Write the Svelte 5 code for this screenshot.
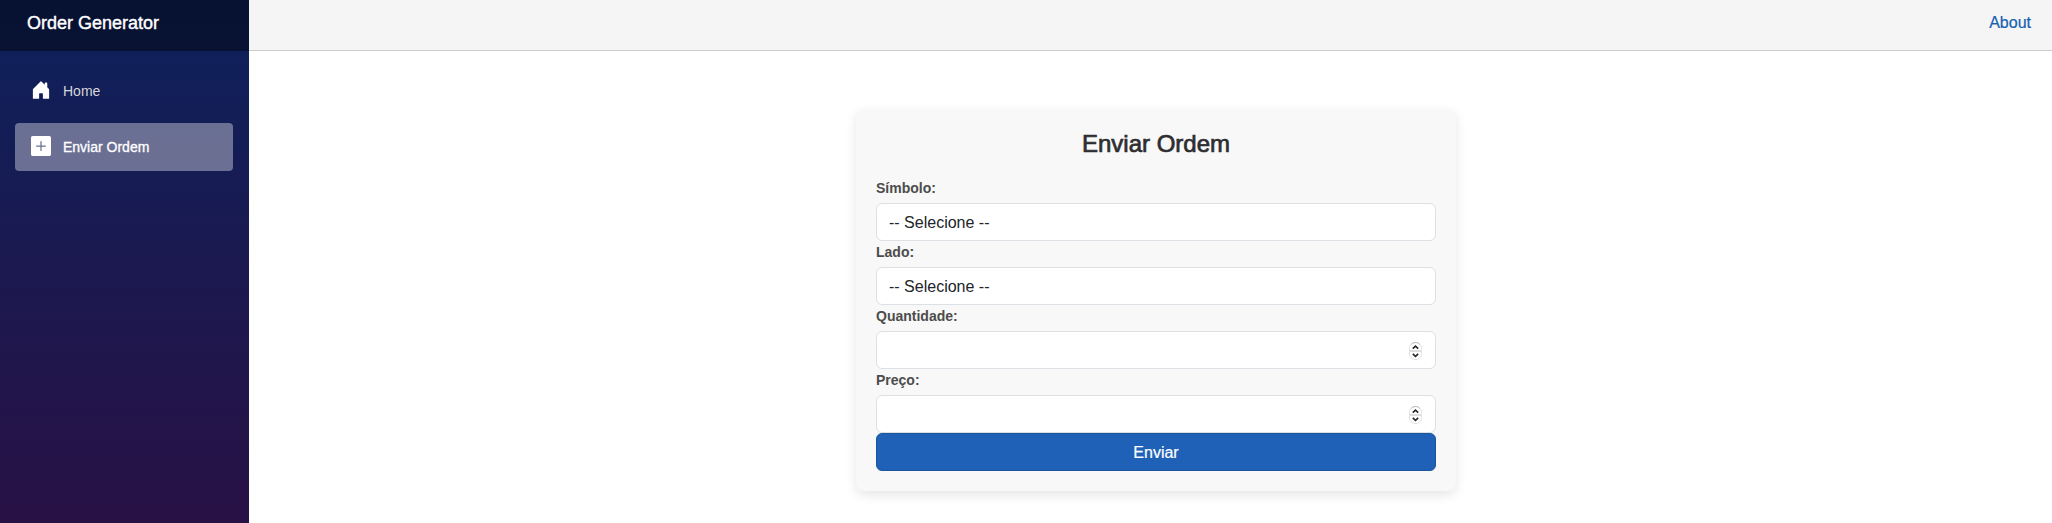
<script>
  let symbol = $state('');
  let side = $state('');
  let quantity = $state(null);
  let price = $state(null);
</script>

{#snippet stepper()}
  <svg class="stepper" width="13" height="18" viewBox="0 0 13 18" aria-hidden="true">
    <rect x=".5" y=".5" width="12" height="17" rx="5.5" fill="#fff" stroke="#e4e4e4" />
    <path d="M2 2.6Q3.500.5 6 .5h1Q9.500.5 11 2.600" fill="none" stroke="#bcbcbc" />
    <path d="M1 9h11" stroke="#dedede" stroke-width="2" />
    <path d="M3.800 6.700 6.500 4.200 9.200 6.700M3.800 11.800 6.500 14.300 9.200 11.800" fill="none" stroke="#262626" stroke-width="1.600" />
  </svg>
{/snippet}

<div class="page">
  <div class="sidebar">
    <div class="brand-row"><a class="brand" href="#home">Order Generator</a></div>
    <nav>
      <a class="nav-link" href="#home">
        <svg width="20" height="20" viewBox="0 0 16 16" fill="#fff" aria-hidden="true">
          <path d="M6.5 14.5v-3.505c0-.245.25-.495.5-.495h2c.25 0 .5.25.5.5v3.5a.5.5 0 0 0 .5.5h4a.5.5 0 0 0 .5-.5v-7a.5.5 0 0 0-.146-.354L13 5.793V2.5a.5.5 0 0 0-.5-.5h-1a.5.5 0 0 0-.5.5v1.293L8.354 1.146a.5.5 0 0 0-.708 0l-6 6A.5.5 0 0 0 1.5 7.500v7a.5.5 0 0 0 .5.5h4a.5.5 0 0 0 .5-.5Z" />
        </svg>
        Home
      </a>
      <a class="nav-link active" href="#order" aria-current="page">
        <svg width="20" height="20" viewBox="0 0 16 16" fill="#fff" aria-hidden="true">
          <path d="M1.500 0C.6 0 0 .6 0 1.500v13c0 .9.6 1.500 1.500 1.500h13c.9 0 1.500-.6 1.500-1.500v-13c0-.9-.6-1.500-1.500-1.500h-13zm7 4.500v3h3a.5.5 0 0 1 0 1h-3v3a.5.5 0 0 1-1 0v-3h-3a.5.5 0 0 1 0-1h3v-3a.5.5 0 0 1 1 0z" />
        </svg>
        Enviar Ordem
      </a>
    </nav>
  </div>

  <main>
    <header><a href="#about">About</a></header>
    <article>
      <form class="card" onsubmit={(e) => e.preventDefault()}>
        <h2>Enviar Ordem</h2>

        <label for="symbol">Símbolo:</label>
        <select id="symbol" bind:value={symbol}>
          <option value="">-- Selecione --</option>
        </select>

        <label for="side">Lado:</label>
        <select id="side" bind:value={side}>
          <option value="">-- Selecione --</option>
        </select>

        <label for="quantity">Quantidade:</label>
        <div class="number">
          <input id="quantity" type="number" bind:value={quantity} />
          {@render stepper()}
        </div>

        <label for="price">Preço:</label>
        <div class="number">
          <input id="price" type="number" bind:value={price} />
          {@render stepper()}
        </div>

        <button type="submit">Enviar</button>
      </form>
    </article>
  </main>
</div>

<style>
  :global(body) {
    margin: 0;
    background: #fff;
  }

  .page,
  .page * {
    box-sizing: border-box;
  }

  .page {
    display: flex;
    min-height: 100vh;
    font-family: "Liberation Sans", Arial, sans-serif;
    font-size: 16px;
    line-height: 24px;
    color: #212529;
  }

  a {
    text-decoration: none;
  }

  .sidebar {
    flex: 0 0 249px;
    background: linear-gradient(180deg, #0d215b 0%, #281145 100%);
  }

  .brand-row {
    height: 51px;
    padding: 11px 27px 0;
    background: rgba(0, 0, 0, 0.43);
  }

  .brand {
    color: #fff;
    font-size: 18px;
    -webkit-text-stroke: 0.4px #fff;
  }

  nav {
    display: flex;
    flex-direction: column;
    gap: 8px;
    padding: 16px 16px 0 15px;
  }

  .nav-link {
    display: flex;
    align-items: center;
    gap: 12px;
    height: 48px;
    padding: 0 16px;
    border-radius: 4px;
    color: #d7d7d7;
    font-size: 14px;
  }

  .nav-link svg {
    margin-bottom: 2px;
  }

  .nav-link.active {
    background: rgba(255, 255, 255, 0.37);
    color: #fff;
    -webkit-text-stroke: 0.3px #fff;
  }

  main {
    flex: 1;
    min-width: 0;
  }

  header {
    display: flex;
    justify-content: flex-end;
    height: 51px;
    padding: 11px 21px 0;
    background: #f5f5f5;
    border-bottom: 1px solid #ccc;
  }

  header a {
    color: #1560b0;
    -webkit-text-stroke: 0.2px #1560b0;
  }

  article {
    padding: 58px 21px 32px 32px;
  }

  .card {
    display: flex;
    flex-direction: column;
    max-width: 600px;
    margin: 0 auto;
    padding: 20px;
    border-radius: 8px;
    background: #f8f8f8;
    box-shadow: 0 4px 12px rgba(0, 0, 0, 0.1);
  }

  h2 {
    margin: 0 0 18px;
    font-size: 24px;
    font-weight: 400;
    line-height: 30px;
    text-align: center;
    color: #2d2d2f;
    -webkit-text-stroke: 0.7px #2d2d2f;
  }

  label {
    margin-bottom: 3px;
    font-size: 14px;
    font-weight: 700;
    line-height: 23px;
    color: #4c4c4c;
  }

  select,
  input,
  button {
    appearance: none;
    display: block;
    width: 100%;
    height: 38px;
    margin: 0;
    padding: 2px 12px 0;
    border: 1px solid #dcdfe3;
    border-radius: 6px;
    background: #fff;
    color: #212529;
    font: inherit;
  }

  input::-webkit-inner-spin-button {
    appearance: none;
    margin: 0;
  }

  .number {
    position: relative;
  }

  .stepper {
    position: absolute;
    top: 11px;
    right: 14px;
    pointer-events: none;
  }

  button {
    border-color: #1b559e;
    background: #1f61b7;
    color: #fff;
    -webkit-text-stroke: 0.2px #fff;
  }
</style>
